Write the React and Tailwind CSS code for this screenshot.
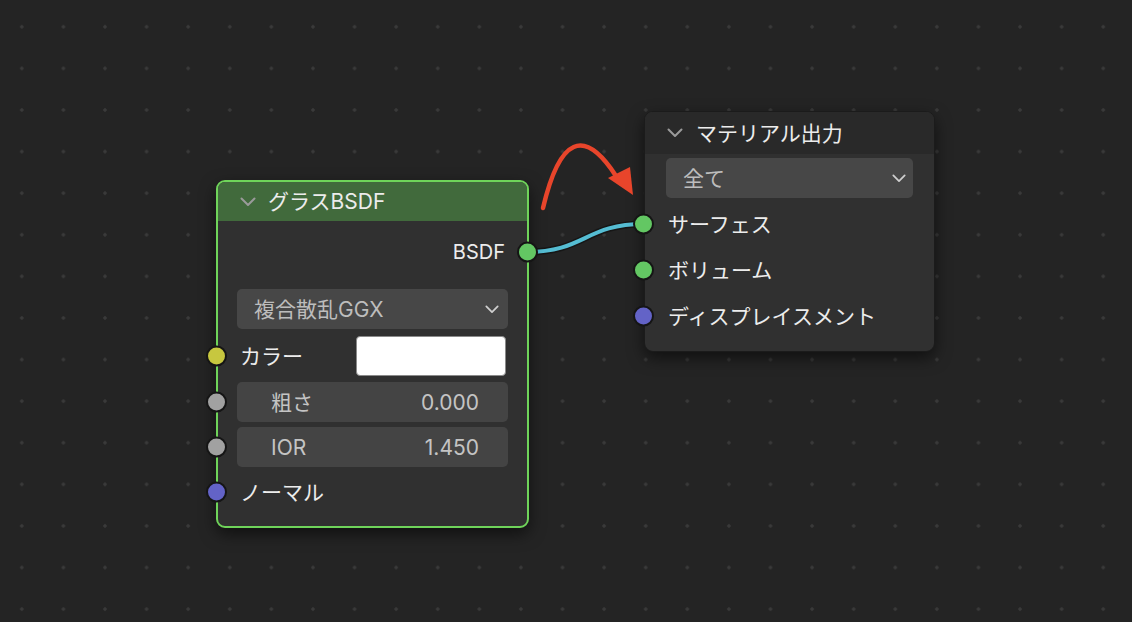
import React from "react";

const FONT = { fontFamily: "Inter, 'Noto Sans CJK JP', sans-serif" };

function Chevron({ className = "", color = "#9a9a9a", w = 16, h = 10, sw = 2 }) {
  return (
    <svg width={w} height={h} viewBox="0 0 16 10" className={className}>
      <polyline points="1.5,1.5 8,8 14.5,1.5" fill="none" stroke={color} strokeWidth={sw} strokeLinecap="round" strokeLinejoin="round" />
    </svg>
  );
}

function Socket({ color, className = "" }) {
  return (
    <div
      className={`absolute top-1/2 -translate-y-1/2 w-[21px] h-[21px] rounded-full border-2 border-[#151515] ${className}`}
      style={{ backgroundColor: color }}
    />
  );
}

function GlassNode() {
  return (
    <div className="absolute left-[216px] top-[180px] w-[313px] rounded-[9px] border-2 border-[#6fd45a] bg-[#303030] shadow-[0_6px_16px_rgba(0,0,0,0.55)]">
      <div className="h-[39px] rounded-t-[7px] bg-[#416a3c] flex items-center pl-[22px] gap-[12px]">
        <Chevron />
        <span className="text-[21px] text-[#ececec] leading-none">グラスBSDF</span>
      </div>
      <div className="relative flex flex-col pb-[22px]">
        <div className="relative mt-[19px] h-[24px] flex items-center justify-end pr-[22px]">
          <span className="text-[20px] text-[#ececec] leading-none">BSDF</span>
          <Socket color="#63c763" className="right-[-11px]" />
        </div>
        <div className="mt-[25px] mx-[19px] h-[40px] rounded-[5px] bg-[#474747] flex items-center justify-between pl-[17px] pr-[9px]">
          <span className="text-[21px] text-[#bdbdbd] leading-none">複合散乱GGX</span>
          <Chevron color="#cfcfcf" w={14} h={9} />
        </div>
        <div className="relative mt-[7px] h-[40px] flex items-center pl-[22px] pr-[21px]">
          <Socket color="#c7c73f" className="left-[-12px]" />
          <span className="text-[21px] text-[#ececec] leading-none flex-1">カラー</span>
          <div className="w-[150px] h-[40px] rounded-[4px] bg-white border border-[#8a8a8a]" />
        </div>
        <div className="relative mt-[6px] h-[40px] mx-[19px] rounded-[5px] bg-[#444444] flex items-center justify-between pl-[34px] pr-[29px]">
          <Socket color="#a1a1a1" className="left-[-31px]" />
          <span className="text-[21px] text-[#c4c4c4] leading-none">粗さ</span>
          <span className="text-[21px] text-[#c4c4c4] leading-none">0.000</span>
        </div>
        <div className="relative mt-[5px] h-[40px] mx-[19px] rounded-[5px] bg-[#444444] flex items-center justify-between pl-[34px] pr-[29px]">
          <Socket color="#a1a1a1" className="left-[-31px]" />
          <span className="text-[21px] text-[#c4c4c4] leading-none">IOR</span>
          <span className="text-[21px] text-[#c4c4c4] leading-none">1.450</span>
        </div>
        <div className="relative mt-[13px] h-[24px] flex items-center pl-[22px]">
          <Socket color="#6363c7" className="left-[-12px]" />
          <span className="text-[21px] text-[#ececec] leading-none">ノーマル</span>
        </div>
      </div>
    </div>
  );
}

function OutputNode() {
  return (
    <div className="absolute left-[644px] top-[111px] w-[291px] rounded-[9px] border border-[#1b1b1b] bg-[#303030] shadow-[0_6px_16px_rgba(0,0,0,0.55)]">
      <div className="h-[42px] rounded-t-[8px] bg-[#292929] flex items-center pl-[22px] gap-[13px]">
        <Chevron />
        <span className="text-[21px] text-[#ececec] leading-none">マテリアル出力</span>
      </div>
      <div className="relative flex flex-col pb-[23px]">
        <div className="mt-[4px] mx-[21px] h-[40px] rounded-[5px] bg-[#474747] flex items-center justify-between pl-[17px] pr-[7px]">
          <span className="text-[21px] text-[#bdbdbd] leading-none">全て</span>
          <Chevron color="#cfcfcf" w={14} h={9} />
        </div>
        <div className="relative mt-[14px] h-[24px] flex items-center pl-[23px]">
          <Socket color="#63c763" className="left-[-12px]" />
          <span className="text-[21px] text-[#ececec] leading-none">サーフェス</span>
        </div>
        <div className="relative mt-[22px] h-[24px] flex items-center pl-[23px]">
          <Socket color="#63c763" className="left-[-12px]" />
          <span className="text-[21px] text-[#ececec] leading-none">ボリューム</span>
        </div>
        <div className="relative mt-[22px] h-[24px] flex items-center pl-[23px]">
          <Socket color="#6363c7" className="left-[-12px]" />
          <span className="text-[21px] text-[#ececec] leading-none">ディスプレイスメント</span>
        </div>
      </div>
    </div>
  );
}

export default function App() {
  return (
    <div
      style={FONT}
      className="relative w-[1132px] h-[622px] overflow-hidden bg-[#242424] bg-[radial-gradient(circle,#3a3a3a_1.4px,transparent_2px)] bg-[length:41.6px_41.6px] bg-[position:1px_6px]"
    >
      <svg className="absolute inset-0" width="1132" height="622">
        <path d="M527,252 C585,252 585,224 644,224" fill="none" stroke="#161616" strokeWidth="7" />
        <path d="M527,252 C585,252 585,224 644,224" fill="none" stroke="#55bdd3" strokeWidth="4" />
      </svg>
      <GlassNode />
      <OutputNode />
      <svg className="absolute inset-0 pointer-events-none" width="1132" height="622">
        <path d="M543,208 Q568,102 616,176" fill="none" stroke="#e8452b" strokeWidth="4.5" strokeLinecap="round" />
        <polygon points="633,195 608,178 630,167" fill="#e8452b" />
      </svg>
    </div>
  );
}
